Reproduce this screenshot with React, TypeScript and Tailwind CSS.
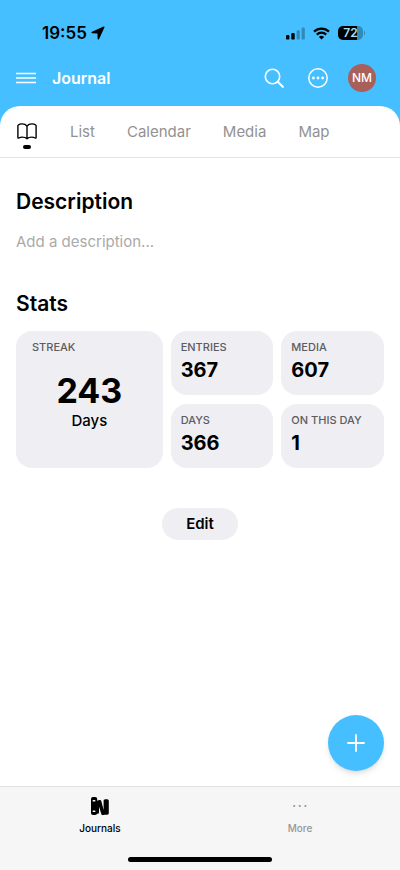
const tabs = ["List", "Calendar", "Media", "Map"];

const stats = [
  { label: "Entries", value: "367" },
  { label: "Media", value: "607" },
  { label: "Days", value: "366" },
  { label: "On this day", value: "1" },
];

function StatusBar() {
  return (
    <div className="flex h-[54px] items-end justify-between pr-[35px] pb-[11px] pl-[42px]">
      <div className="flex items-center gap-1 text-black">
        <span className="text-[17px] leading-5 font-semibold">19:55</span>
        <svg width="14" height="14" viewBox="0 0 14 14" fill="currentColor">
          <path d="M12.6.6 1 5.8c-.9.4-.7 1.5.2 1.5l5 .1c.2 0 .3.1.3.3l.1 5c0 .9 1.1 1.1 1.5.3L13.4 1.4c.3-.7-.2-1.1-.8-.8Z" />
        </svg>
      </div>
      <div className="flex h-5 items-center gap-2">
        <svg width="20" height="13" viewBox="0 0 20 13">
          <rect x="1" y="8" width="3.4" height="4.6" rx="1.2" />
          <rect x="6.3" y="6" width="3.4" height="6.6" rx="1.2" />
          <rect x="11.6" y="3.2" width="3.2" height="9.4" rx="1.2" fill="#328ab8" />
          <rect x="16.6" y="0.6" width="3.2" height="12" rx="1.2" fill="#328ab8" />
        </svg>
        <svg width="17" height="13" viewBox="0 0 17 13" fill="none" stroke="black" strokeWidth="2.2">
          <path d="M1 4.6a10.7 10.7 0 0 1 15 0" />
          <path d="M3.8 7.6a6.7 6.7 0 0 1 9.4 0" />
          <path d="M8.5 12.6 5.9 9.9a3.9 3.9 0 0 1 5.2 0Z" fill="black" stroke="none" />
        </svg>
        <div className="flex items-center gap-px">
          <div className="h-[14px] w-[25px] rounded-[5px] bg-linear-to-r from-black from-75% to-[#328ab8] to-75% text-center text-[12px] leading-[14px] font-semibold text-[#a8e1ff]">
            72
          </div>
          <div className="h-1 w-px rounded-r bg-[#328ab8]" />
        </div>
      </div>
    </div>
  );
}

function NavBar() {
  return (
    <div className="flex h-[52px] items-center pr-6 pb-1 pl-4 text-white">
      <button aria-label="Menu">
        <svg width="20" height="12" viewBox="0 0 20 12" stroke="currentColor" strokeWidth="1.5">
          <path d="M0 1.5h20M0 6h20M0 10.5h20" />
        </svg>
      </button>
      <h1 className="ml-4 flex-1 text-[16px] leading-6 font-semibold">Journal</h1>
      <button aria-label="Search">
        <svg width="20" height="20" viewBox="0 0 20 20" fill="none" stroke="currentColor" strokeLinecap="round">
          <circle cx="8.5" cy="8.5" r="7.2" strokeWidth="1.6" />
          <path d="m14 14 4.8 4.8" strokeWidth="2.2" />
        </svg>
      </button>
      <button aria-label="Options" className="ml-6">
        <svg width="20" height="20" viewBox="0 0 20 20" fill="none" stroke="currentColor" strokeWidth="1.5">
          <circle cx="10" cy="10" r="9.2" />
          <g fill="currentColor" stroke="none">
            <circle cx="5.4" cy="10" r="1.4" />
            <circle cx="10" cy="10" r="1.4" />
            <circle cx="14.6" cy="10" r="1.4" />
          </g>
        </svg>
      </button>
      <button className="ml-5 size-7 rounded-full bg-[#a9605a] text-[12px] font-medium">NM</button>
    </div>
  );
}

function Tabs() {
  return (
    <nav className="flex h-[52px] items-center gap-8 border-b border-[#e4e4e6] px-4">
      <button aria-label="Journal overview" className="flex w-[22px] flex-col items-center gap-[5px] pt-2">
        <svg width="20" height="17" viewBox="0 0 20 17" fill="none" stroke="black" strokeWidth="1.4" strokeLinejoin="round" strokeLinecap="round">
          <path d="M10 3.1C8.8 1.5 7.1.9 5.2.9 3.6.9 2.2 1.3 1.3 2c-.3.2-.4.4-.4.7v11.8c0 .6.5.8 1 .5 1-.6 2.1-.9 3.3-.9 1.9 0 3.6.5 4.8 1.7 1.2-1.2 2.9-1.7 4.8-1.7 1.2 0 2.3.3 3.3.9.5.3 1 .1 1-.5V2.7c0-.3-.1-.5-.4-.7-.9-.7-2.3-1.1-3.9-1.1-1.9 0-3.6.6-4.8 2.2Zm0 0v12.7" />
        </svg>
        <span className="h-1 w-2 rounded-full bg-black" />
      </button>
      {tabs.map((tab) => (
        <button key={tab} className="text-[15px] leading-5 text-[#929292]">
          {tab}
        </button>
      ))}
    </nav>
  );
}

function Stats() {
  return (
    <div className="mt-[13px] grid grid-cols-[10fr_7fr_7fr] gap-x-2 gap-y-[9px]">
      <div className="row-span-2 flex flex-col rounded-2xl bg-[#efeef3] px-4 pt-2">
        <p className="text-[11px] leading-4 font-medium text-[#5c5c60] uppercase">Streak</p>
        <p className="mt-4 text-center text-[34px] leading-10 font-bold">243</p>
        <p className="text-center text-[15px] leading-5 font-medium">Days</p>
      </div>
      {stats.map((stat) => (
        <div key={stat.label} className="h-16 rounded-2xl bg-[#efeef3] px-[10px] pt-2">
          <p className="text-[11px] leading-4 font-medium whitespace-nowrap text-[#5c5c60] uppercase">{stat.label}</p>
          <p className="mt-[3px] text-[20px] leading-6 font-bold">{stat.value}</p>
        </div>
      ))}
    </div>
  );
}

function TabBar() {
  return (
    <footer className="border-t border-[#e2e2e3] bg-[#f6f6f6]">
      <div className="grid h-[70px] grid-cols-2 items-start pt-[9px] text-[10px] leading-3 font-medium">
        <button className="flex flex-col items-center gap-[6px] text-black">
          <svg width="20" height="20" viewBox="0 0 20 20" fill="currentColor">
            <rect x="1" y="1" width="6.2" height="18" rx="2" />
            <path d="M6.6 6c0-.9.4-1.4 1.2-1.6l1.6-.4c1-.2 1.7.2 1.9 1.1l2.3 9V5c0-1 .6-1.700 1.600-1.700h2c1 0 1.600.7 1.600 1.700v12c0 1-.6 1.700-1.600 1.700h-2.400l-1.600.4c-1 .2-1.700-.2-1.900-1.100L9 10.500v6.800L6.600 18Z" />
            <g fill="#f6f6f6">
              <rect x="2.6" y="4" width="2.8" height="1.6" rx=".5" />
              <rect x="2.6" y="14.4" width="2.8" height="1.6" rx=".5" />
            </g>
          </svg>
          Journals
        </button>
        <button className="flex flex-col items-center gap-[6px] text-[#969696]">
          <svg width="20" height="20" viewBox="0 0 20 20" fill="currentColor">
            <circle cx="4.2" cy="10" r="1.1" />
            <circle cx="9.8" cy="10" r="1.1" />
            <circle cx="15.4" cy="10" r="1.1" />
          </svg>
          More
        </button>
      </div>
      <div className="mx-auto mb-2 h-[5px] w-36 rounded-full bg-black" />
    </footer>
  );
}

export default function App() {
  return (
    <div className="flex min-h-screen flex-col bg-[#45bfff] font-['Inter',sans-serif] text-black">
      <StatusBar />
      <NavBar />
      <div className="flex flex-1 flex-col overflow-hidden rounded-t-[20px] bg-white">
        <Tabs />
        <main className="relative flex flex-1 flex-col px-4 pt-[30px]">
          <h2 className="text-[21px] leading-7 font-semibold">Description</h2>
          <p className="mt-4 text-[15px] leading-5 text-[#aaaaaa]">Add a description...</p>
          <h2 className="mt-[38px] text-[21px] leading-7 font-semibold">Stats</h2>
          <Stats />
          <button className="mt-10 h-8 w-[76px] self-center rounded-full bg-[#efeef3] text-[15px] font-semibold">
            Edit
          </button>
          <button
            aria-label="New entry"
            className="absolute right-4 bottom-[15px] flex size-14 items-center justify-center rounded-full bg-[#45bfff] text-white shadow-md"
          >
            <svg width="18" height="18" viewBox="0 0 18 18" stroke="currentColor" strokeWidth="1.8" strokeLinecap="round">
              <path d="M9 1v16M1 9h16" />
            </svg>
          </button>
        </main>
        <TabBar />
      </div>
    </div>
  );
}
